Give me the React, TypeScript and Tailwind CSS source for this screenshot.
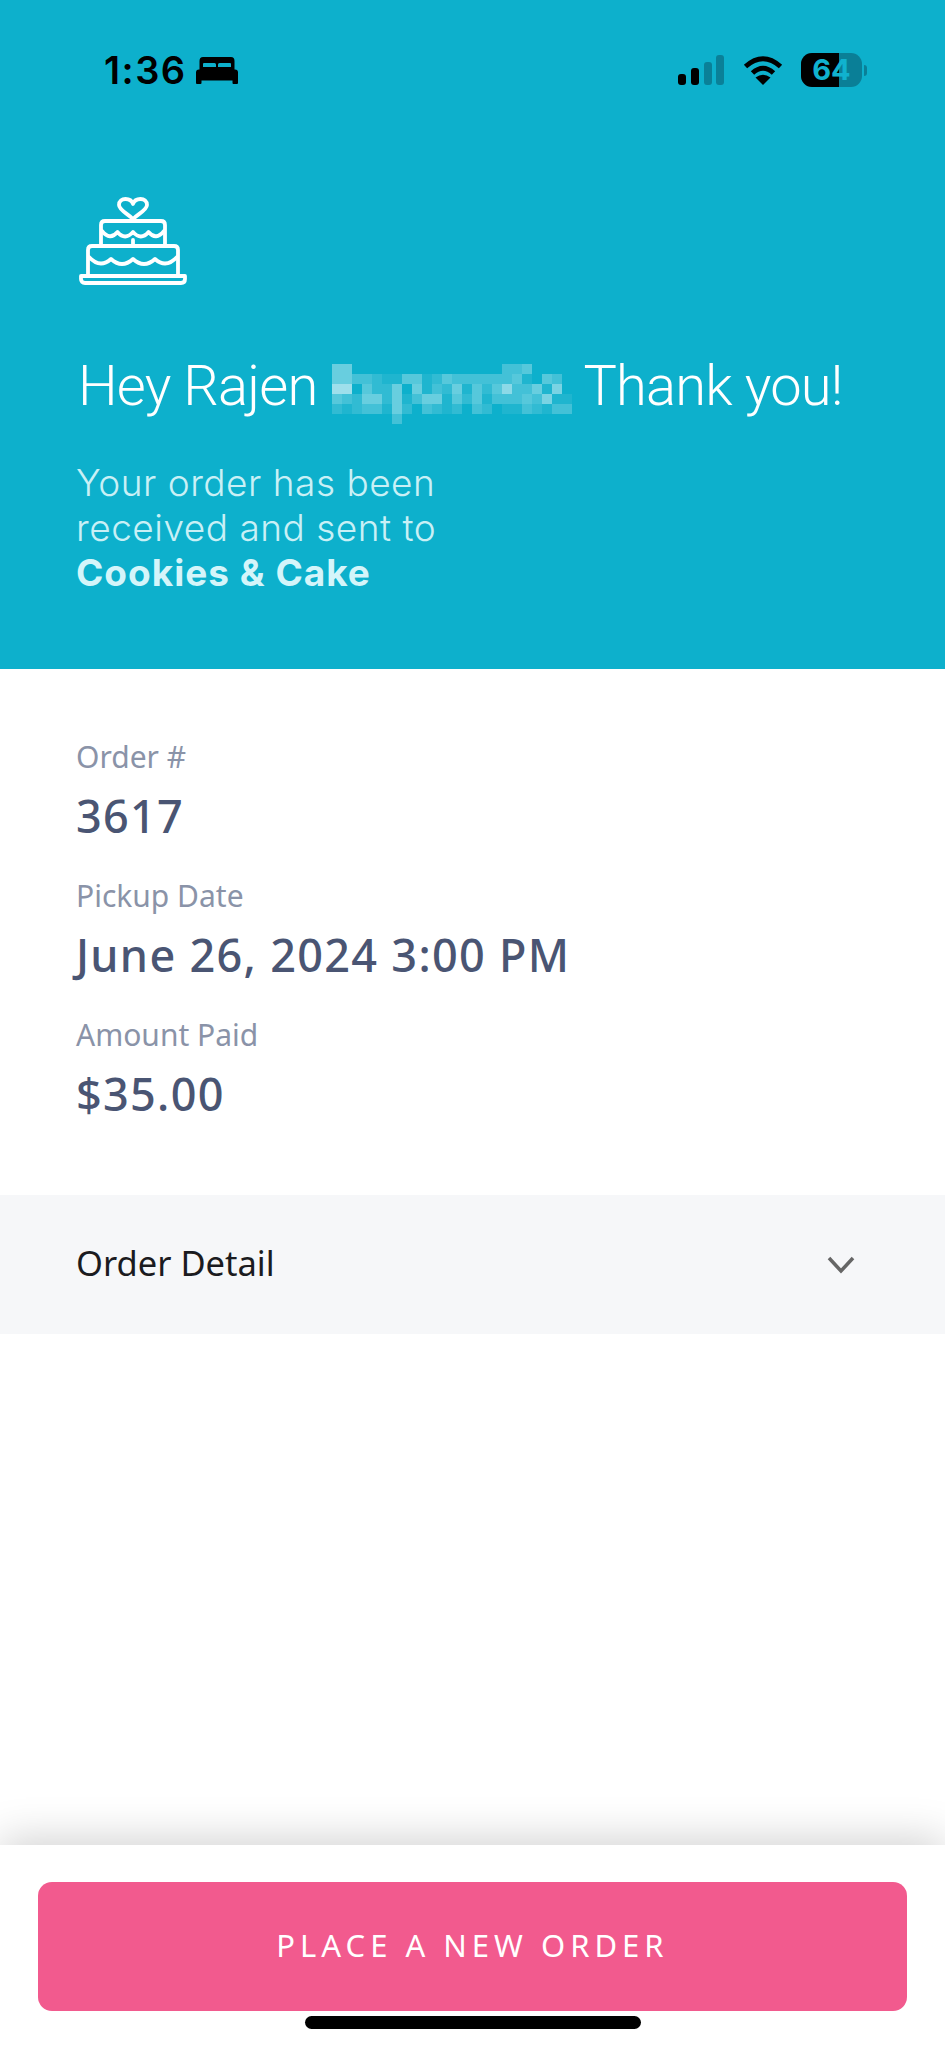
const blurRows = [
  '550000000000000003340000',
  '553321144124333333410430',
  '880422505132514247335160',
  '432552513551424133343611',
  '212331520321203201132133',
  '000000300000000000000000',
];

function BedIcon() {
  return (
    <svg className="ml-[9px] h-[27px] w-[42px]" viewBox="0 0 42 27" fill="black">
      <path
        fillRule="evenodd"
        d="M7 0H35Q38.500 0 38.500 4V13H3.500V4Q3.500 0 7 0ZM8 6H18.500Q20 6 20 7.500V10H7V7Q7 6 8 6ZM23.500 6H34Q35 6 35 7V10H22V7.500Q22 6 23.500 6Z"
      />
      <path d="M3 12.500H39Q42 12.500 42 15.500V26Q42 27 41 27H37.500Q36.500 27 36.500 26V23.500H5.500V26Q5.500 27 4.500 27H1Q0 27 0 26V15.500Q0 12.500 3 12.500Z" />
    </svg>
  );
}

function SignalIcon() {
  return (
    <svg className="h-[30px] w-[46px]" viewBox="0 0 46 30">
      <rect x="0" y="19" width="8" height="11" rx="3" fill="black" />
      <rect x="13" y="13" width="8" height="17" rx="3" fill="black" />
      <rect x="26" y="7" width="8" height="23" rx="3" fill="#0a8098" />
      <rect x="38" y="0" width="8" height="30" rx="3" fill="#0a8098" />
    </svg>
  );
}

function WifiIcon() {
  return (
    <svg className="ml-[19px] h-[30px] w-[40px]" viewBox="0 0 40 30" fill="none" stroke="black" strokeWidth="5">
      <path d="M2.500 11.500Q20 -4 37.500 11.500" />
      <path d="M9.500 18Q20 8.500 30.500 18" />
      <path d="M20 30L12.500 22.500Q20 17 27.500 22.500Z" fill="black" stroke="none" />
    </svg>
  );
}

function Battery() {
  return (
    <div className="ml-[18px] flex items-center">
      <div className="relative h-[34px] w-[61px] overflow-hidden rounded-[11px] bg-[#0a7f97]">
        <div className="h-full w-[38px] bg-black" />
        <span className="absolute inset-0 flex items-center justify-center text-[29px] font-bold text-[#10b2cf] font-['Inter',sans-serif]">
          64
        </span>
      </div>
      <div className="ml-[2px] h-[11px] w-[3px] rounded-r-full bg-[#0a7f97]" />
    </div>
  );
}

function CakeIcon() {
  return (
    <svg
      className="ml-[78px] mt-[110px] h-[88px] w-[109px]"
      viewBox="0 0 109 88"
      fill="none"
      stroke="white"
      strokeWidth="3.800"
      strokeLinejoin="round"
      strokeLinecap="round"
    >
      <path d="M55 22C50 17 41 13 41 8C41 4 44 2 47.500 2C51 2 54 4 55 7C56 4 59 2 62.500 2C66 2 69 4 69 8C69 13 60 17 55 22Z" />
      <path d="M23 48V28Q23 24 27 24H83Q87 24 87 28V48" />
      <path d="M24 34Q32 44 39.500 35Q47 44 55 35Q63 44 70.500 35Q78 44 86 34" />
      <path d="M55 43V48" />
      <path d="M10 78V53Q10 49 14 49H96Q100 49 100 53V78" />
      <path d="M11 60Q22 72 33 62Q44 72 55 62Q66 72 77 62Q88 72 99 60" />
      <path d="M3 79H107V82Q107 86 103 86H7Q3 86 3 82Z" />
    </svg>
  );
}

function PixelatedName() {
  return (
    <div className="ml-[15px] mr-[11px] grid translate-y-[8px] grid-cols-[repeat(24,10px)] grid-rows-[repeat(6,10px)]">
      {blurRows.flatMap((row, r) =>
        row.split('').map((v, c) => (
          <div key={`${r}-${c}`} className="bg-white" style={{ opacity: Number(v) * 0.075 }} />
        ))
      )}
    </div>
  );
}

function InfoRow({ label, value }: { label: string; value: string }) {
  return (
    <div className="h-[139px]">
      <div className="text-[30px] leading-[40px] text-[#8a93a8] font-['Noto_Sans',sans-serif]">{label}</div>
      <div className="mt-[11px] text-[45px] leading-[56px] font-medium tracking-[1.3px] text-[#4a5573] font-['Noto_Sans',sans-serif]">
        {value}
      </div>
    </div>
  );
}

export default function App() {
  return (
    <div className="flex h-[2048px] w-[945px] flex-col overflow-hidden bg-white">
      <header className="h-[669px] bg-[#0db0cc] pt-[53px]">
        <div className="flex h-[34px] items-center pl-[104px] pr-[78px]">
          <span className="text-[38px] font-semibold leading-[34px] tracking-[1.5px] text-black font-['Inter',sans-serif]">1:36</span>
          <BedIcon />
          <div className="ml-auto flex items-center">
            <SignalIcon />
            <WifiIcon />
            <Battery />
          </div>
        </div>
        <CakeIcon />
        <div className="ml-[78px] mt-[68px] flex items-center text-[56px] font-light leading-[66px] tracking-[-0.8px] text-white font-['Roboto',sans-serif]">
          <span>Hey Rajen</span>
          <PixelatedName />
          <span>Thank you!</span>
        </div>
        <div className="ml-[76px] mt-[41px] text-[37px] font-light leading-[45px] tracking-[0.5px] text-[#c9f0f6] font-['Inter',sans-serif]">
          <div>Your order has been</div>
          <div>received and sent to</div>
          <div className="font-bold tracking-[1px] text-[#d4f5fa]">Cookies &amp; Cake</div>
        </div>
      </header>

      <section className="px-[76px] pt-[68px]">
        <InfoRow label="Order #" value="3617" />
        <InfoRow label="Pickup Date" value="June 26, 2024 3:00 PM" />
        <InfoRow label="Amount Paid" value="$35.00" />
      </section>

      <div className="mt-[41px] flex h-[139px] items-center justify-between bg-[#f6f7f9] pl-[76px] pr-[90px]">
        <span className="pb-[4px] text-[34.500px] text-[#1b1b20] font-['Noto_Sans',sans-serif]">Order Detail</span>
        <svg className="h-[18px] w-[28px]" viewBox="0 0 28 18" fill="none" stroke="#666" strokeWidth="3.500">
          <path d="M2 2L14 15L26 2" />
        </svg>
      </div>

      <div className="flex-1" />

      <footer className="z-10 h-[203px] bg-white pt-[37px] shadow-[0_-6px_40px_rgba(0,0,0,0.18)]">
        <button className="mx-[38px] flex h-[129px] w-[869px] items-center justify-center rounded-[14px] bg-[#f25a8e] pb-[2px] text-[31px] tracking-[5px] text-white font-['Noto_Sans',sans-serif]">
          PLACE A NEW ORDER
        </button>
        <div className="mx-auto mt-[5px] h-[13px] w-[336px] rounded-full bg-black" />
      </footer>
    </div>
  );
}
